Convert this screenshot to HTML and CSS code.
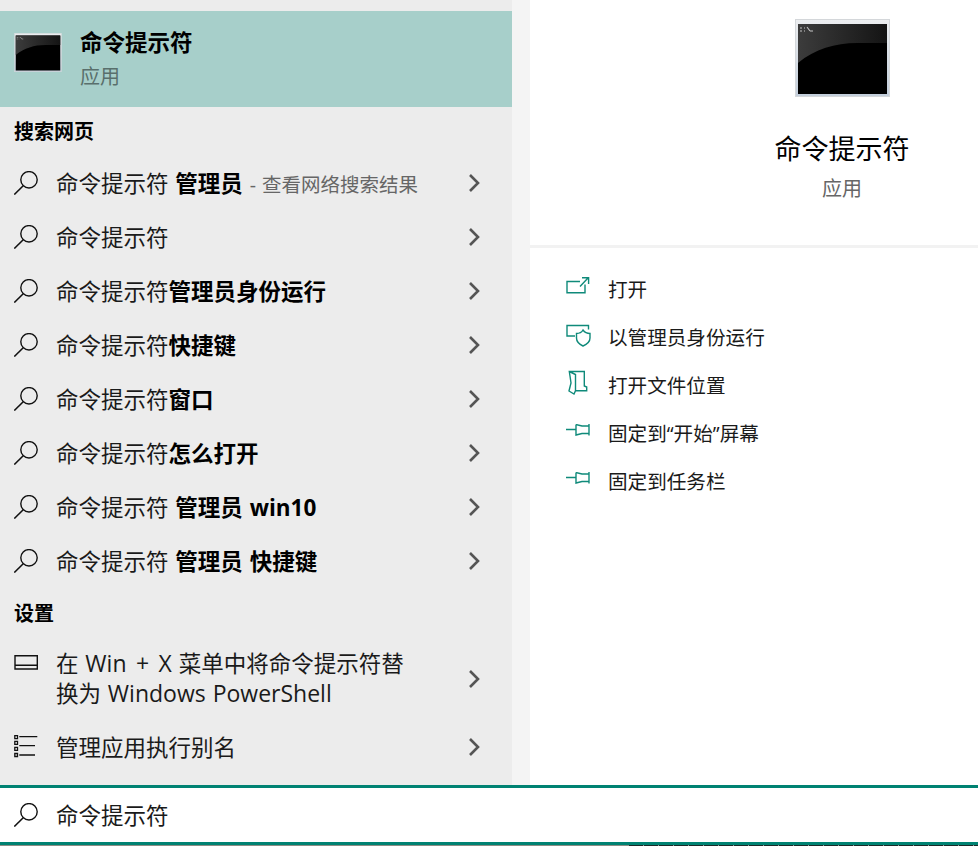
FILE: index.html
```
<!DOCTYPE html>
<html lang="zh-CN">
<head>
<meta charset="utf-8">
<title>命令提示符</title>
<link rel="stylesheet" href="styles.css">
</head>
<body>
<svg class="defs" width="0" height="0" aria-hidden="true">
  <defs>
    <linearGradient id="glass" x1="0" y1="0" x2="1" y2="0">
      <stop offset="0" stop-color="#3c3c3c"/><stop offset="1" stop-color="#141414"/>
    </linearGradient>
    <linearGradient id="frame" x1="0" y1="0" x2="0" y2="1">
      <stop offset="0" stop-color="#eceef0"/><stop offset="1" stop-color="#c3cedb"/>
    </linearGradient>
    <symbol id="cmd" viewBox="0 0 95 78">
      <rect x="0.5" y="0.5" width="94" height="77" fill="url(#frame)" stroke="#d4d7da"/>
      <rect x="3" y="5" width="89" height="70" fill="#000"/>
      <path d="M3 5H92V24H62C40 24 20 30 3 44Z" fill="url(#glass)"/>
      <path d="M5 9h2M5 12h2M9 9h1M9 12h1M12 8l3 4M15 12h3" stroke="#c4c4c4" stroke-width="1.100" fill="none"/>
    </symbol>
    <symbol id="search" viewBox="0 0 24 24">
      <circle cx="15" cy="8.800" r="8.200" fill="none" stroke="currentColor" stroke-width="1.400"/>
      <path d="M9.200 14.800 .3 23.600" fill="none" stroke="currentColor" stroke-width="1.500"/>
    </symbol>
    <symbol id="chev" viewBox="0 0 12 20">
      <path d="M2 2l8 8-8 8" fill="none" stroke="#555" stroke-width="2.600"/>
    </symbol>
    <symbol id="pin" viewBox="0 0 24 12">
      <path d="M0 5.500H10M10 .5 16 2H23M23 0V11.500M23 9.500H16L10 11V.5" fill="none" stroke="currentColor" stroke-width="1.400"/>
    </symbol>
  </defs>
</svg>
<div class="page">
  <main class="panes">
    <section class="results">
      <div class="best">
        <svg class="best-icon"><use href="#cmd"/></svg>
        <div class="best-text">
          <div class="best-title">命令提示符</div>
          <div class="best-sub">应用</div>
        </div>
      </div>
      <h2 class="group web">搜索网页</h2>
      <div class="row"><svg class="ic"><use href="#search"/></svg><span class="label">命令提示符 <b>管理员</b> <span class="hint">- 查看网络搜索结果</span></span><svg class="chev"><use href="#chev"/></svg></div>
      <div class="row"><svg class="ic"><use href="#search"/></svg><span class="label">命令提示符</span><svg class="chev"><use href="#chev"/></svg></div>
      <div class="row"><svg class="ic"><use href="#search"/></svg><span class="label">命令提示符<b>管理员身份运行</b></span><svg class="chev"><use href="#chev"/></svg></div>
      <div class="row"><svg class="ic"><use href="#search"/></svg><span class="label">命令提示符<b>快捷键</b></span><svg class="chev"><use href="#chev"/></svg></div>
      <div class="row"><svg class="ic"><use href="#search"/></svg><span class="label">命令提示符<b>窗口</b></span><svg class="chev"><use href="#chev"/></svg></div>
      <div class="row"><svg class="ic"><use href="#search"/></svg><span class="label">命令提示符<b>怎么打开</b></span><svg class="chev"><use href="#chev"/></svg></div>
      <div class="row"><svg class="ic"><use href="#search"/></svg><span class="label">命令提示符 <b>管理员 win10</b></span><svg class="chev"><use href="#chev"/></svg></div>
      <div class="row"><svg class="ic"><use href="#search"/></svg><span class="label">命令提示符 <b>管理员 快捷键</b></span><svg class="chev"><use href="#chev"/></svg></div>
      <h2 class="group settings">设置</h2>
      <div class="row tall">
        <svg class="ic first-line" viewBox="0 0 24 24"><path d="M1 5.700H23.300V19H1ZM1 15.200H23.300" fill="none" stroke="currentColor" stroke-width="1.400"/></svg>
        <span class="label">在 <span class="lat wide">Win + X</span> 菜单中将命令提示符替<br>换为 <span class="lat">Windows PowerShell</span></span>
        <svg class="chev"><use href="#chev"/></svg>
      </div>
      <div class="row">
        <svg class="ic" viewBox="0 0 24 24"><path d="M.8 .6h2.700v3h-2.700ZM.8 6.300h2.700v3h-2.700ZM.8 12.300h2.700v3h-2.700ZM.8 18.500h2.700v3h-2.700ZM5.300 1.700H23.300M5.300 10.700H21M5.300 20H21" fill="none" stroke="currentColor" stroke-width="1.300"/></svg>
        <span class="label">管理应用执行别名</span>
        <svg class="chev"><use href="#chev"/></svg>
      </div>
    </section>
    <div class="gutter"></div>
    <section class="detail">
      <div class="hero">
        <svg class="hero-icon"><use href="#cmd"/></svg>
        <div class="hero-title">命令提示符</div>
        <div class="hero-sub">应用</div>
      </div>
      <ul class="actions">
        <li class="action">
          <svg class="act" viewBox="0 0 24 24"><path d="M14 5.500H1V16.800H19V8.500M14 10.500 22 2M16 1.700H22.600V8" fill="none" stroke="currentColor" stroke-width="1.400"/></svg>
          打开
        </li>
        <li class="action">
          <svg class="act" viewBox="0 0 24 24"><path d="M9 12H1V1.500H22.500V5.500M10.500 9.500Q15 9.500 17 6Q19.500 9.500 24 9.500V14Q24 19 17 22Q10.500 19 10.500 14Z" fill="none" stroke="currentColor" stroke-width="1.400"/></svg>
          以管理员身份运行
        </li>
        <li class="action">
          <svg class="act" viewBox="0 0 24 24"><path d="M3.300 -.5H18.300V14L20.700 15V18.700H9.500L8 22 3 19 5 11 4 4ZM3.300 -.5 9.500 2.500V18.700" fill="none" stroke="currentColor" stroke-width="1.400"/></svg>
          打开文件位置
        </li>
        <li class="action">
          <svg class="act pin"><use href="#pin"/></svg>
          固定到“开始”屏幕
        </li>
        <li class="action">
          <svg class="act pin"><use href="#pin"/></svg>
          固定到任务栏
        </li>
      </ul>
    </section>
  </main>
  <div class="searchbar">
    <svg class="ic"><use href="#search"/></svg>
    <span class="label">命令提示符</span>
  </div>
  <div class="under"><i class="under-a"></i><i class="under-b"></i></div>
</div>
</body>
</html>
```
FILE: styles.css
```
* { box-sizing: border-box; }
html, body { margin: 0; padding: 0; background: #fff; }
body {
  font-family: "Open Sans", "Noto Sans CJK SC", sans-serif;
  color: #000;
  overflow: hidden;
}
.defs { display: block; height: 0; }
.page { width: 978px; height: 846px; overflow: hidden; display: flex; flex-direction: column; }
.panes { display: flex; height: 785px; flex: none; }
.results { width: 512px; flex: none; padding-top: 11px; background: #ececec; }
.gutter { width: 18px; flex: none; background: #f4f4f4; }
.best { height: 96px; background: #a7cfca; display: flex; align-items: flex-start; padding: 22px 0 0 14px; }
.best-icon { width: 48px; height: 39px; flex: none; }
.best-text { margin: -1px 0 0 18px; }
.best-title { font-size: 22.500px; font-weight: 700; line-height: 22px; }
.best-sub { font-size: 20px; line-height: 22px; margin-top: 12px; color: #596f6c; }
.group { margin: 0; font-size: 20px; font-weight: 700; padding: 0 0 3px 14px; display: flex; align-items: center; }
.web { height: 49px; }
.settings { height: 50px; padding-bottom: 1px; }
.row { height: 54px; display: flex; align-items: center; padding: 0 32px 0 14px; }
.row.tall { height: 82px; }
.ic { width: 24px; height: 24px; flex: none; color: #111; }
.ic.first-line { align-self: flex-start; margin-top: 12px; }
.label { flex: 1; margin-left: 18px; padding-top: 2px; font-size: 22.500px; line-height: 30px; word-spacing: 1px; white-space: nowrap; color: #1a1a1a; }
.tall .label { padding-top: 0; }
.label b { font-weight: 700; color: #000; }
.lat { font-size: 23px; line-height: 1; }
.lat.wide { word-spacing: 3.500px; }
.hint { color: #666; font-size: 19.500px; }
.chev { width: 12px; height: 20px; flex: none; }
.detail { width: 624px; flex: none; background: #fff; }
.hero { height: 248px; border-bottom: 3px solid #f2f2f2; display: flex; flex-direction: column; align-items: center; padding-top: 19px; }
.hero-icon { width: 95px; height: 78px; }
.hero-title { font-size: 27px; line-height: 36px; margin-top: 34px; }
.hero-sub { font-size: 20px; line-height: 28px; margin-top: 8px; color: #666; }
.actions { list-style: none; margin: 0; padding: 16px 0 0 36px; }
.action { height: 48px; display: flex; align-items: center; font-size: 19.600px; color: #1a1a1a; }
.act { width: 24px; height: 24px; flex: none; margin-right: 18px; color: #0f8a7a; overflow: visible; }
.act.pin { height: 12px; margin-top: -4px; }
.searchbar { height: 60px; flex: none; border-top: 3px solid #008272; border-bottom: 3px solid #008272; padding-left: 14px; display: flex; align-items: center; background: #fff; }
.under { height: 1px; display: flex; flex: none; }
.under-a { width: 629px; background: #8d8d84; }
.under-b { flex: 1; background: repeating-linear-gradient(to right, #1d2a28 0, #1d2a28 14px, #8f9a98 14px, #8f9a98 15px); }
```
